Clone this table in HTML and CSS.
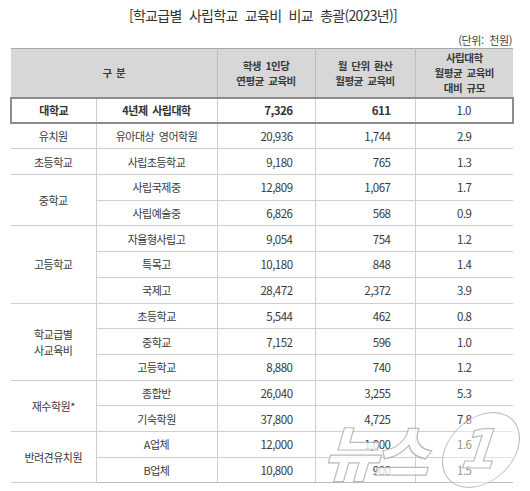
FILE: index.html
```html
<!DOCTYPE html>
<html lang="ko">
<head>
<meta charset="utf-8">
<link rel="stylesheet" href="styles.css">
</head>
<body>
<div class="page">
  <h1 class="title">[학교급별 사립학교 교육비 비교 총괄(2023년)]</h1>
  <div class="unit">(단위: 천원)</div>
  <table class="tbl">
    <colgroup>
      <col class="c1"><col class="c2"><col class="c3"><col class="c4"><col class="c5">
    </colgroup>
    <thead>
      <tr class="head">
        <th colspan="2">구 분</th>
        <th>학생 1인당<br>연평균 교육비</th>
        <th>월 단위 환산<br>월평균 교육비</th>
        <th>사립대학<br>월평균 교육비<br>대비 규모</th>
      </tr>
    </thead>
    <tbody>
      <tr class="hl">
        <td class="cat">대학교</td><td class="sub">4년제 사립대학</td><td class="n1">7,326</td><td class="n2">611</td><td class="r">1.0</td>
      </tr>
      <tr>
        <td class="cat">유치원</td><td class="sub">유아대상 영어학원</td><td class="n1">20,936</td><td class="n2">1,744</td><td class="r">2.9</td>
      </tr>
      <tr>
        <td class="cat">초등학교</td><td class="sub">사립초등학교</td><td class="n1">9,180</td><td class="n2">765</td><td class="r">1.3</td>
      </tr>
      <tr>
        <td class="cat" rowspan="2">중학교</td><td class="sub">사립국제중</td><td class="n1">12,809</td><td class="n2">1,067</td><td class="r">1.7</td>
      </tr>
      <tr>
        <td class="sub">사립예술중</td><td class="n1">6,826</td><td class="n2">568</td><td class="r">0.9</td>
      </tr>
      <tr>
        <td class="cat" rowspan="3">고등학교</td><td class="sub">자율형사립고</td><td class="n1">9,054</td><td class="n2">754</td><td class="r">1.2</td>
      </tr>
      <tr>
        <td class="sub">특목고</td><td class="n1">10,180</td><td class="n2">848</td><td class="r">1.4</td>
      </tr>
      <tr>
        <td class="sub">국제고</td><td class="n1">28,472</td><td class="n2">2,372</td><td class="r">3.9</td>
      </tr>
      <tr>
        <td class="cat" rowspan="3">학교급별<br>사교육비</td><td class="sub">초등학교</td><td class="n1">5,544</td><td class="n2">462</td><td class="r">0.8</td>
      </tr>
      <tr>
        <td class="sub">중학교</td><td class="n1">7,152</td><td class="n2">596</td><td class="r">1.0</td>
      </tr>
      <tr>
        <td class="sub">고등학교</td><td class="n1">8,880</td><td class="n2">740</td><td class="r">1.2</td>
      </tr>
      <tr>
        <td class="cat" rowspan="2">재수학원*</td><td class="sub">종합반</td><td class="n1">26,040</td><td class="n2">3,255</td><td class="r">5.3</td>
      </tr>
      <tr>
        <td class="sub">기숙학원</td><td class="n1">37,800</td><td class="n2">4,725</td><td class="r">7.8</td>
      </tr>
      <tr>
        <td class="cat" rowspan="2">반려견유치원</td><td class="sub">A업체</td><td class="n1">12,000</td><td class="n2">1,000</td><td class="r">1.6</td>
      </tr>
      <tr>
        <td class="sub">B업체</td><td class="n1">10,800</td><td class="n2">900</td><td class="r">1.5</td>
      </tr>
    </tbody>
  </table>
  <div class="wm"><span class="wm-txt">뉴스</span><span class="wm-one"><span class="wm-num">1</span></span></div>
</div>
</body>
</html>
```

FILE: styles.css
```css
* { box-sizing: border-box; }
html, body { margin: 0; padding: 0; background: #fff; }
body {
  width: 530px;
  height: 491px;
  overflow: hidden;
  font-family: "Noto Sans CJK KR", "Noto Sans", sans-serif;
  color: #3a3a3a;
}
.page {
  position: relative;
  width: 530px;
  height: 491px;
  overflow: hidden;
  padding: 4px 18px 0 10px;
}
.title {
  margin: 0;
  height: 24px;
  line-height: 22px;
  font-size: 14px;
  font-weight: 400;
  letter-spacing: -0.7px;
  word-spacing: 4px;
  text-align: center;
  color: #333;
  padding-left: 4px;
}
.unit {
  height: 20px;
  line-height: 24px;
  font-size: 11px;
  letter-spacing: -0.4px;
  word-spacing: 3px;
  text-align: right;
  color: #444;
}
.tbl {
  width: 502px;
  border-collapse: collapse;
  table-layout: fixed;
  font-size: 11px;
  letter-spacing: -0.5px;
}
.c1 { width: 85px; }
.c2 { width: 121px; }
.c3 { width: 98px; }
.c4 { width: 100px; }
.c5 { width: 98px; }
.tbl th, .tbl td {
  padding: 0;
  border: 1px solid #cfcfcf;
  vertical-align: middle;
  line-height: 16px;
}
.tbl tr > :first-child { border-left: none; }
.tbl tr > :last-child { border-right: none; }
.head th {
  height: 49px;
  background: #d7d7d7;
  border-top: 1px solid #a8a8a8;
  border-left-color: #bdbdbd;
  border-right-color: #bdbdbd;
  font-weight: 700;
  color: #3a3a3a;
  font-size: 10.5px;
  line-height: 15px;
  word-spacing: 2px;
}
.tbl tbody tr { height: 25.7px; }
.tbl td.cat { text-align: center; }
.tbl td.sub { text-align: center; }
.tbl td.n1 { text-align: right; padding-right: 22px; }
.tbl td.n2 { text-align: right; padding-right: 24px; }
.tbl td.r { text-align: center; }
.tbl tbody td { font-size: 11.5px; }
.tbl td.cat, .tbl td.sub { font-size: 11px; word-spacing: 2px; }
.tbl tr.hl td {
  height: 25px;
  font-weight: 700;
  border-top: 2px solid #8c8c8c;
  border-bottom: 2px solid #8c8c8c;
  color: #333;
}
.tbl tr.hl td:first-child { border-left: 2px solid #8c8c8c; }
.tbl tr.hl td:last-child { border-right: 2px solid #8c8c8c; font-weight: 400; }
.tbl tbody tr:last-child td { border-bottom-color: #bdbdbd; }

.wm {
  position: absolute;
  left: 330px;
  top: 410px;
  height: 80px;
  display: flex;
  align-items: center;
  opacity: 0.8;
  pointer-events: none;
}
.wm-txt {
  font-family: "Noto Sans CJK KR", sans-serif;
  font-weight: 900;
  font-size: 60px;
  line-height: 78px;
  letter-spacing: -5px;
  color: #fff;
  -webkit-text-stroke: 1.2px #aaaaaa;
  display: inline-block;
  transform: skewX(-16deg);
}
.wm-one {
  width: 74px;
  height: 76px;
  border: 1.4px solid #aaaaaa;
  border-radius: 37px / 38px;
  background: rgba(255,255,255,0.55);
  transform: skewX(-18deg);
  display: flex;
  align-items: center;
  justify-content: center;
  margin-left: 14px;
}
.wm-num {
  font-family: "DejaVu Sans", sans-serif;
  font-weight: 700;
  font-size: 54px;
  line-height: 62px;
  color: #fff;
  -webkit-text-stroke: 1.2px #aaaaaa;
}
```
